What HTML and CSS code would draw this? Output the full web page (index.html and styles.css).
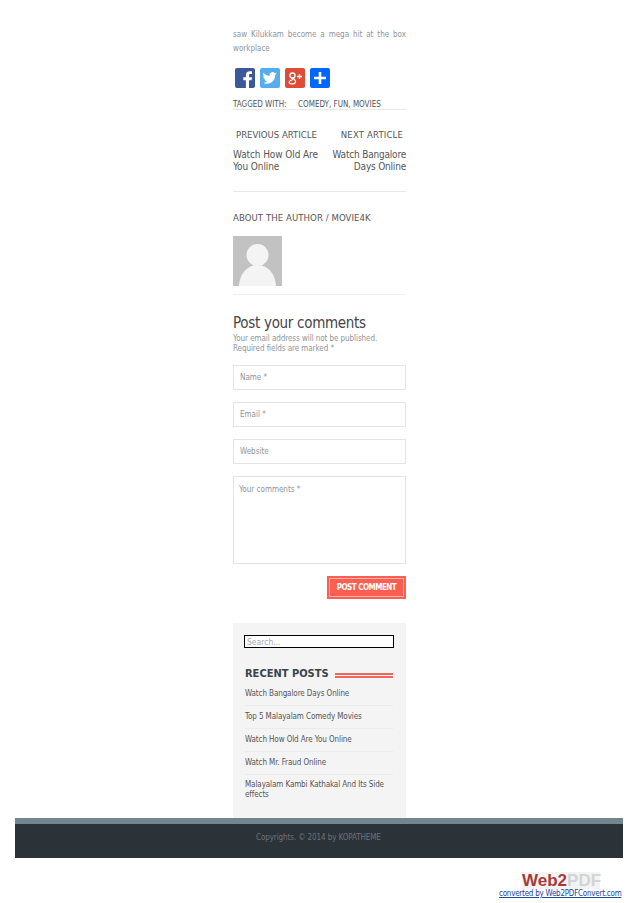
FILE: index.html
```html
<!DOCTYPE html>
<html lang="en">
<head>
<meta charset="utf-8">
<title>Post your comments</title>
<link rel="stylesheet" href="styles.css">
</head>
<body>
<main class="column">
  <p class="intro">saw Kilukkam become a mega hit at the box workplace</p>
  <div class="share">
    <svg class="icon" viewBox="0 0 20 20"><rect width="20" height="20" rx="2" fill="#3b5998"/><path d="M14 20v-7.7h2.6l.4-3h-3V7.4c0-.9.3-1.4 1.5-1.4H17V3.300c-.3 0-1.200-.1-2.300-.1-2.300 0-3.800 1.400-3.800 3.900v2.200H8.300v3h2.600V20z" fill="#fff"/></svg>
    <svg class="icon" viewBox="0 0 20 20"><rect width="20" height="20" rx="2" fill="#55acee"/><path d="M17 5.600c-.5.2-1.100.4-1.700.5.600-.4 1.100-1 1.300-1.700-.6.300-1.200.6-1.900.7a3 3 0 0 0-5.100 2.700C7.200 7.700 5 6.500 3.600 4.700c-.8 1.400-.4 3.100.9 4-.5 0-.9-.1-1.300-.4 0 1.500 1 2.700 2.400 3-.4.100-.9.100-1.300 0 .4 1.200 1.500 2 2.800 2.100-1.300 1-2.900 1.400-4.400 1.200 4.300 2.800 12.400.9 12.400-7.500.6-.4 1.100-.9 1.900-1.500z" fill="#fff"/></svg>
    <svg class="icon" viewBox="0 0 20 20"><rect width="20" height="20" rx="2" fill="#dd4b39"/><circle cx="7.500" cy="7.500" r="2.500" fill="none" stroke="#fff" stroke-width="1.300"/><path d="M7.500 10c3.500 2 3.500 3.500 2.500 5-1 1.200-4 1.200-5.500.3C3.500 14 5 12 7.500 12M6.500 10l1.500 2" fill="none" stroke="#fff" stroke-width="1.200"/><path d="M14.500 6v5M12 8.500h5" stroke="#fff" stroke-width="1.300"/></svg>
    <svg class="icon" viewBox="0 0 20 20"><rect width="20" height="20" rx="2" fill="#0166ff"/><path d="M10 4v12M4 10h12" stroke="#fff" stroke-width="2.600"/></svg>
  </div>
  <div class="tags"><span class="tags-label">TAGGED WITH:</span><span>COMEDY, FUN, MOVIES</span></div>
  <div class="articles">
    <div class="article">
      <h4 class="article-head prev-head">PREVIOUS ARTICLE</h4>
      <p class="article-link">Watch How Old Are You Online</p>
    </div>
    <div class="article article-next">
      <h4 class="article-head next-head">NEXT ARTICLE</h4>
      <p class="article-link">Watch Bangalore Days Online</p>
    </div>
  </div>
  <h4 class="author-title">ABOUT THE AUTHOR / MOVIE4K</h4>
  <div class="author">
    <svg class="avatar" viewBox="0 0 49 50"><rect width="49" height="50" fill="#c2c2c2"/><circle cx="24.500" cy="19" r="11" fill="#f4f4f4"/><path d="M6 50c0-2 1-13 9-18 3-2 5-3 9.500-3s6.500 1 9.500 3c8 5 9 16 9 18z" fill="#f4f4f4"/></svg>
  </div>
  <h2 class="comments-title">Post your comments</h2>
  <p class="comments-note">Your email address will not be published. Required fields are marked *</p>
  <div class="field">Name *</div>
  <div class="field">Email *</div>
  <div class="field">Website</div>
  <div class="field field-area">Your comments *</div>
  <div class="submit-row"><span class="submit"><span class="submit-inner">POST COMMENT</span></span></div>
  <aside class="sidebar">
    <div class="search">Search...</div>
    <div class="recent-head"><h3 class="recent-title">RECENT POSTS</h3><span class="recent-rule"></span></div>
    <ul class="recent-list">
      <li>Watch Bangalore Days Online</li>
      <li>Top 5 Malayalam Comedy Movies</li>
      <li>Watch How Old Are You Online</li>
      <li>Watch Mr. Fraud Online</li>
      <li>Malayalam Kambi Kathakal And Its Side effects</li>
    </ul>
  </aside>
</main>
<footer class="footer"><p class="copyright">Copyrights. © 2014 by KOPATHEME</p></footer>
<div class="badge">
  <div class="badge-logo"><span class="web">Web2</span><span class="pdf">PDF</span></div>
  <a class="badge-link" href="#">converted by Web2PDFConvert.com</a>
</div>
</body>
</html>
```
FILE: styles.css
```css
* { box-sizing: border-box; }
html, body { margin: 0; padding: 0; }
body {
  width: 638px;
  height: 903px;
  overflow: hidden;
  background: #fff;
  font-family: "DejaVu Sans", sans-serif;
  font-stretch: condensed;
  color: #555;
}
.column {
  width: 173px;
  margin-left: 233px;
  padding-top: 28px;
}
.intro {
  margin: 0;
  font-size: 8px;
  line-height: 14px;
  color: #8f959a;
  text-align: justify;
}
.share {
  display: flex;
  gap: 5px;
  margin: 12px 0 0 2px;
}
.icon { width: 20px; height: 20px; display: block; }
.tags {
  display: flex;
  margin-top: 11px;
  height: 11px;
  border-bottom: 1px solid #e8e8e8;
  font-size: 8px;
  line-height: 11px;
  color: #555;
  white-space: nowrap;
}
.tags-label { width: 65px; }
.articles {
  display: flex;
  justify-content: space-between;
  margin-top: 19px;
  padding-bottom: 18px;
  border-bottom: 1px solid #e8e8e8;
}
.article { width: 90px; }
.article-next { width: 82px; text-align: right; }
.article-head {
  margin: 0;
  font-size: 9.500px;
  font-weight: 400;
  line-height: 12px;
  color: #555;
  white-space: nowrap;
}
.prev-head { padding-left: 3px; }
.next-head { padding-right: 3px; letter-spacing: 0.15px; }
.article-link {
  margin: 8px 0 0;
  font-size: 10px;
  line-height: 12px;
  letter-spacing: -0.1px;
  color: #555;
}
.article-next .article-link { letter-spacing: -0.2px; }
.author-title {
  margin: 20px 0 0;
  font-size: 9.500px;
  font-weight: 400;
  line-height: 12px;
  letter-spacing: 0.08px;
  color: #555;
  white-space: nowrap;
}
.author {
  margin-top: 12px;
  height: 59px;
  border-bottom: 1px solid #eee;
}
.avatar { display: block; width: 49px; height: 50px; }
.comments-title {
  margin: 19px 0 0;
  font-size: 15px;
  font-weight: 400;
  line-height: 19px;
  letter-spacing: -0.3px;
  color: #444;
  white-space: nowrap;
}
.comments-note {
  margin: 1px 0 -1px;
  font-size: 8px;
  line-height: 10px;
  letter-spacing: -0.07px;
  color: #8f959a;
}
.field {
  height: 25px;
  margin-top: 12px;
  padding-left: 6px;
  border: 1px solid #e4e4e4;
  font-size: 8px;
  line-height: 24px;
  color: #8f959a;
}
.field-area {
  height: 88px;
  padding-left: 5px;
  line-height: 25px;
}
.submit-row {
  display: flex;
  justify-content: flex-end;
  margin-top: 12px;
}
.submit {
  display: block;
  width: 79px;
  height: 23px;
  padding: 2px;
  background: #fc5f52;
}
.submit-inner {
  display: block;
  height: 19px;
  border: 1px solid #fbb5ae;
  font-size: 8px;
  font-weight: 700;
  line-height: 17px;
  text-align: center;
  letter-spacing: -0.5px;
  color: #fff;
  white-space: nowrap;
}
.sidebar {
  height: 195px;
  margin-top: 24px;
  padding: 12px 13px 0 12px;
  background: #f4f4f5;
}
.search {
  width: 150px;
  height: 13px;
  margin-left: -1px;
  padding-left: 2px;
  border: 1px solid #000;
  background: #fff;
  font-size: 8.500px;
  line-height: 12px;
  color: #aaa;
}
.recent-head {
  display: flex;
  align-items: center;
  margin-top: 18px;
}
.recent-title {
  margin: 0;
  font-size: 11px;
  font-weight: 700;
  line-height: 16px;
  color: #39434a;
  white-space: nowrap;
}
.recent-rule {
  flex: 1;
  height: 5px;
  margin: 3px 0 0 6px;
  border-top: 2px solid #f0685c;
  border-bottom: 2px solid #f0685c;
}
.recent-list {
  margin: 1px 0 0;
  padding: 0;
  list-style: none;
}
.recent-list li {
  padding: 6px 0;
  border-bottom: 1px solid #ebebeb;
  font-size: 8px;
  line-height: 10px;
  letter-spacing: -0.1px;
  color: #555;
}
.recent-list li:last-child { padding-top: 5px; border-bottom: 0; }
.footer {
  width: 608px;
  height: 40px;
  margin: 0 0 0 15px;
  padding-top: 4px;
  border-top: 6px solid #72868e;
  background: #2b3238;
}
.copyright {
  margin: 0;
  padding-left: 241px;
  font-size: 8px;
  line-height: 20px;
  letter-spacing: -0.1px;
  color: #6c7478;
}
.badge {
  width: 128px;
  margin: 14px 0 0 499px;
}
.badge-logo {
  width: 78px;
  margin-left: 23px;
  height: 17px;
  background: #f3f3f3;
  font-family: "Liberation Sans", sans-serif;
  font-stretch: normal;
  font-size: 17px;
  font-weight: 700;
  line-height: 17px;
  white-space: nowrap;
}
.web { color: #a83a3a; }
.pdf { color: #d4d4d4; }
.badge-link {
  display: block;
  font-size: 8px;
  line-height: 9px;
  letter-spacing: -0.25px;
  color: #22449a;
  text-decoration: underline;
  white-space: nowrap;
}
```
